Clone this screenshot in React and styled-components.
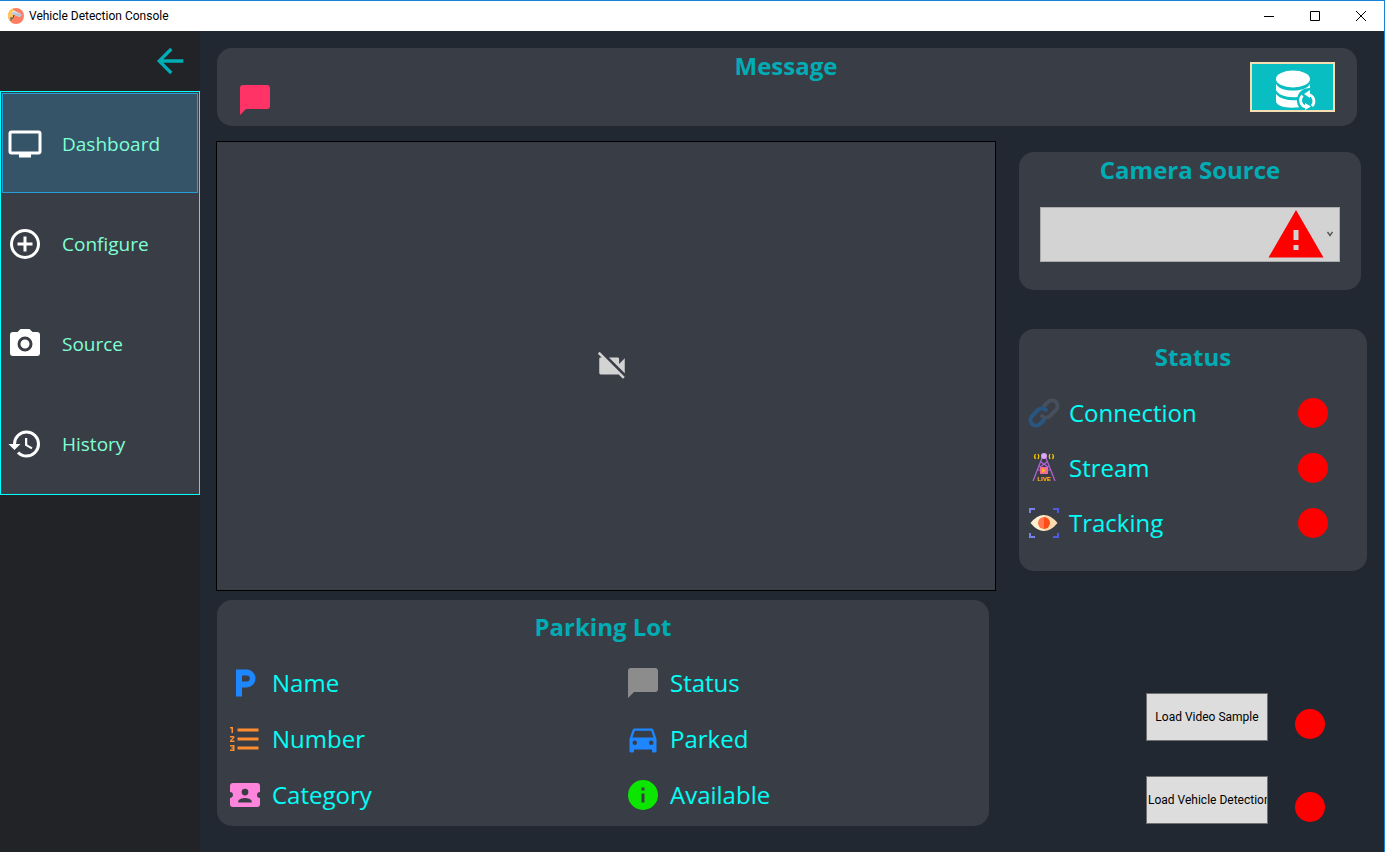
import React, { useState } from 'react'
import styled, { createGlobalStyle, ThemeProvider } from 'styled-components'

const theme = {
  pageBg: '#222831',
  panelBg: '#393e46',
  sideBg: '#222326',
  teal: '#00adb5',
  aqua: '#00fff6',
  mint: '#7fffd4',
  windowBlue: '#1883d7',
}

const GlobalStyle = createGlobalStyle`
  *, *::before, *::after {
    box-sizing: border-box;
  }
  body {
    margin: 0;
    font-family: "Open Sans", "Noto Sans", sans-serif;
  }
  button, select {
    font-family: inherit;
  }
`

const Window = styled.div`
  min-height: 100vh;
  display: flex;
  flex-direction: column;
  background: ${props => props.theme.pageBg};
  border-top: 1px solid ${props => props.theme.windowBlue};
  border-right: 1px solid ${props => props.theme.windowBlue};
`

const TitleBar = styled.header`
  height: 30px;
  flex-shrink: 0;
  display: flex;
  align-items: center;
  background: #fff;
  padding-left: 8px;
  h1 {
    flex: 1;
    margin: 0 0 0 5px;
    font-family: Roboto, sans-serif;
    font-size: 12px;
    font-weight: 400;
    line-height: 16px;
    color: #000;
  }
`

const CaptionButton = styled.button`
  width: 46px;
  height: 29px;
  padding: 0;
  border: none;
  background: none;
  display: flex;
  align-items: center;
  justify-content: center;
`

const Body = styled.div`
  flex: 1;
  display: flex;
`

const Sidebar = styled.aside`
  width: 200px;
  flex-shrink: 0;
  background: ${props => props.theme.sideBg};
`

const BackButton = styled.button`
  display: block;
  margin: 0 10px 0 auto;
  padding: 10px 0;
  border: none;
  background: none;
  color: ${props => props.theme.teal};
  svg {
    display: block;
  }
`

const NavList = styled.ul`
  list-style: none;
  margin: 0;
  padding: 1px;
  border: 1px solid #00ffff;
  background: ${props => props.theme.panelBg};
`

const NavButton = styled.button`
  width: 100%;
  height: 100px;
  padding: 2px 0 0 4px;
  display: flex;
  align-items: center;
  gap: 19px;
  border: 1px solid ${props => (props.$active ? '#26a0da' : 'transparent')};
  background: ${props => (props.$active ? '#355468' : 'none')};
  color: ${props => props.theme.mint};
  font-size: 19px;
  line-height: 28px;
  svg {
    color: #fff;
  }
`

const Main = styled.main`
  flex: 1;
  min-width: 0;
  display: flex;
  flex-direction: column;
  padding: 17px 17px 26px 16px;
`

const Panel = styled.section`
  background: ${props => props.theme.panelBg};
  border-radius: 15px;
`

const PanelTitle = styled.h2`
  display: block;
  margin: 0;
  font-size: 24px;
  font-weight: 700;
  line-height: 32px;
  text-align: center;
  color: ${props => props.theme.teal};
`

const MessagePanel = styled(Panel)`
  height: 78px;
  margin: 0 10px 0 1px;
  padding: 2px 22px 0 20px;
  display: grid;
  grid-template-columns: 85px 1fr 85px;
  svg {
    display: block;
  }
`

const MessageIcon = styled.div`
  padding-top: 32px;
  color: #ff3366;
`

const DatabaseButton = styled.button`
  height: 50px;
  margin-top: 12px;
  padding: 6px 0 0 6px;
  border: 2px solid #f5deb3;
  background: #08bec2;
  display: flex;
  align-items: center;
  justify-content: center;
  color: #fff;
`

const Columns = styled.div`
  flex: 1;
  display: flex;
  gap: 23px;
  padding-top: 15px;
`

const LeftColumn = styled.div`
  flex: 1;
  min-width: 0;
  display: flex;
  flex-direction: column;
  gap: 9px;
`

const VideoArea = styled.div`
  flex: 1;
  min-height: 240px;
  display: flex;
  align-items: center;
  justify-content: center;
  padding-left: 12px;
  border: 1px solid #000;
  background: ${props => props.theme.panelBg};
  color: #d3d3d3;
`

const ParkingPanel = styled(Panel)`
  margin: 0 7px 0 1px;
  padding: 11px 10px 3px;
`

const ParkingGrid = styled.ul`
  list-style: none;
  margin: 0;
  padding: 12px 0 0;
  display: grid;
  grid-template-columns: 398px 1fr;
`

const RightColumn = styled.div`
  width: 348px;
  flex-shrink: 0;
  display: flex;
  flex-direction: column;
`

const CameraPanel = styled(Panel)`
  margin: 11px 6px 39px 0;
  padding: 2px 21px 28px;
`

const SelectWrap = styled.div`
  position: relative;
  margin-top: 21px;
  select {
    display: block;
    appearance: none;
    width: 100%;
    height: 55px;
    border: 1px solid #acacac;
    border-radius: 0;
    background: #d3d3d3;
  }
`

const AlertMark = styled.span`
  position: absolute;
  right: 14px;
  top: -2px;
  color: #ff0000;
  pointer-events: none;
`

const Chevron = styled.svg`
  position: absolute;
  right: 7px;
  top: 24px;
  pointer-events: none;
`

const StatusPanel = styled(Panel)`
  padding: 12px 7px 21px;
`

const StatusList = styled.ul`
  list-style: none;
  margin: 0;
  padding: 12px 0 0;
`

const Row = styled.li`
  height: 56px;
  display: flex;
  align-items: center;
  gap: 9px;
  color: ${props => props.theme.aqua};
  font-size: 24px;
  line-height: 32px;
  svg {
    flex-shrink: 0;
  }
`

const StatusRow = styled(Row)`
  height: 55px;
  gap: 7px;
`

const Lamp = styled.span`
  width: 30px;
  height: 30px;
  flex-shrink: 0;
  border-radius: 50%;
  background: #ff0000;
`

const RowLamp = styled(Lamp)`
  margin: 0 32px 0 auto;
`

const Actions = styled.div`
  margin-top: auto;
  padding: 0 42px 2px 0;
  display: flex;
  flex-direction: column;
  align-items: flex-end;
  gap: 35px;
`

const Action = styled.div`
  display: flex;
  align-items: flex-end;
  gap: 27px;
  ${Lamp} {
    margin-bottom: 2px;
  }
`

const LoadButton = styled.button`
  width: 122px;
  height: 48px;
  padding: 0 1px;
  overflow: hidden;
  display: flex;
  justify-content: ${props => (props.$long ? 'flex-start' : 'center')};
  align-items: center;
  border: 1px solid #707070;
  background: #ddd;
  color: #000;
  font-family: Roboto, sans-serif;
  font-size: 12px;
  line-height: 16px;
  white-space: nowrap;
`

const paths = {
  arrowLeft: 'M20,11V13H8L13.5,18.5L12.08,19.92L4.16,12L12.08,4.08L13.5,5.5L8,11H20Z',
  television: 'M21,17H3V5H21M21,3H3A2,2 0 0,0 1,5V17A2,2 0 0,0 3,19H8V21H16V19H21A2,2 0 0,0 23,17V5A2,2 0 0,0 21,3Z',
  plus: 'M12,20C7.59,20 4,16.41 4,12C4,7.59 7.59,4 12,4C16.41,4 20,7.59 20,12C20,16.41 16.41,20 12,20M12,2A10,10 0 0,0 2,12A10,10 0 0,0 12,22A10,10 0 0,0 22,12A10,10 0 0,0 12,2M13,7H11V11H7V13H11V17H13V13H17V11H13V7Z',
  camera: 'M4,4H7L9,2H15L17,4H20A2,2 0 0,1 22,6V18A2,2 0 0,1 20,20H4A2,2 0 0,1 2,18V6A2,2 0 0,1 4,4M12,7A5,5 0 0,0 7,12A5,5 0 0,0 12,17A5,5 0 0,0 17,12A5,5 0 0,0 12,7M12,9A3,3 0 0,1 15,12A3,3 0 0,1 12,15A3,3 0 0,1 9,12A3,3 0 0,1 12,9Z',
  history: 'M13.5,8H12V13L16.28,15.54L17,14.33L13.5,12.25V8M13,3A9,9 0 0,0 4,12H1L4.96,16.03L9,12H6A7,7 0 0,1 13,5A7,7 0 0,1 20,12A7,7 0 0,1 13,19C11.07,19 9.32,18.21 8.06,16.94L6.64,18.36C8.27,20 10.5,21 13,21A9,9 0 0,0 22,12A9,9 0 0,0 13,3',
  message: 'M20,2H4A2,2 0 0,0 2,4V22L6,18H20A2,2 0 0,0 22,16V4C22,2.89 21.1,2 20,2Z',
  videoOff: 'M3.27,2L2,3.27L4.73,6H4A1,1 0 0,0 3,7V17A1,1 0 0,0 4,18H16C16.2,18 16.39,17.92 16.54,17.82L19.73,21L21,19.73M21,6.5L17,10.5V7A1,1 0 0,0 16,6H9.82L21,17.18V6.5Z',
  parking: 'M13.2,11H10V7H13.2A2,2 0 0,1 15.2,9A2,2 0 0,1 13.2,11M13,3H6V21H10V15H13A6,6 0 0,0 19,9C19,5.68 16.31,3 13,3Z',
  numbers: 'M7,13V11H21V13H7M7,19V17H21V19H7M7,7V5H21V7H7M3,8V5H2V4H4V8H3M2,17V16H5V20H2V19H4V18.5H3V17.5H4V17H2M4.25,10A0.75,0.75 0 0,1 5,10.75C5,10.95 4.92,11.14 4.79,11.27L3.12,13H5V14H2V13.08L4,11H2V10H4.25Z',
  ticket: 'M20,12A2,2 0 0,0 22,14V18A2,2 0 0,1 20,20H4A2,2 0 0,1 2,18V14C3.11,14 4,13.1 4,12A2,2 0 0,0 2,10V6A2,2 0 0,1 4,4H20A2,2 0 0,1 22,6V10A2,2 0 0,0 20,12M16.5,16.25C16.5,14.75 13.5,14 12,14C10.5,14 7.5,14.75 7.5,16.25V17H16.5V16.25M12,12.25A2.25,2.25 0 0,0 14.25,10A2.25,2.25 0 0,0 12,7.75A2.25,2.25 0 0,0 9.75,10A2.25,2.25 0 0,0 12,12.25Z',
  car: 'M5,11L6.5,6.5H17.5L19,11M17.5,16A1.5,1.5 0 0,1 16,14.5A1.5,1.5 0 0,1 17.5,13A1.5,1.5 0 0,1 19,14.5A1.5,1.5 0 0,1 17.5,16M6.5,16A1.5,1.5 0 0,1 5,14.5A1.5,1.5 0 0,1 6.5,13A1.5,1.5 0 0,1 8,14.5A1.5,1.5 0 0,1 6.5,16M18.92,6C18.72,5.42 18.16,5 17.5,5H6.5C5.84,5 5.28,5.42 5.08,6L3,12V20A1,1 0 0,0 4,21H5A1,1 0 0,0 6,20V19H18V20A1,1 0 0,0 19,21H20A1,1 0 0,0 21,20V12L18.92,6Z',
  info: 'M13,9H11V7H13M13,17H11V11H13M12,2A10,10 0 0,0 2,12A10,10 0 0,0 12,22A10,10 0 0,0 22,12A10,10 0 0,0 12,2Z',
  alert: 'M13,14H11V10H13M13,18H11V16H13M1,21H23L12,2L1,21Z',
}

const Icon = ({ name, size = 36, color = 'currentColor' }) => (
  <svg width={size} height={size} viewBox="0 0 24 24" fill={color} aria-hidden="true">
    <path d={paths[name]} />
  </svg>
)

const AppLogo = () => (
  <svg width="16" height="16" viewBox="0 0 16 16" aria-hidden="true">
    <circle cx="8" cy="8" r="8" fill="#ff7d62" />
    <path d="M5 0.600A8 8 0 0 0 3 14.200L5 10Z" fill="#ffc957" />
    <path d="M5 2l8 4-1 3-8-3z" fill="#e4eaf2" />
    <path d="M4 6l8 3 2-2-1-1-8-2z" fill="#b9c5d6" />
    <path d="M6 7l-1 3-2 1M3 9v4" stroke="#4a4a5c" fill="none" />
  </svg>
)

const DatabaseSync = () => (
  <svg width="42" height="40" viewBox="0 0 42 40" fill="#fff" aria-hidden="true">
    <ellipse cx="18" cy="9" rx="17" ry="8.500" />
    <path d="M1 14c3 5 10 6.500 17 6.500S32 19 35 14v4c-6 0-11 3-12.500 9C12 28 3 25 1 20z" />
    <path d="M1 24c4 5 12 6.500 21 6.200 0 3 .6 5 2.200 7C13 38.500 3 37 1 32z" />
    <g fill="none" stroke="#fff" strokeWidth="2.800">
      <path d="M27.500 25.500a7 7 0 0 0 3 11.500" />
      <path d="M34 24.500a7 7 0 0 1 3 11.500" />
    </g>
    <path d="M35 20v8l-6-4zM30 33v7l6-3.500z" />
  </svg>
)

const LinkIcon = () => (
  <svg width="36" height="36" viewBox="0 0 36 36" fill="none" strokeWidth="4" strokeLinecap="round" aria-hidden="true">
    <path d="M18 11l4-4a6 6 0 0 1 8 0 6 6 0 0 1 0 8l-6 6a6 6 0 0 1-8 0" stroke="#474f5d" />
    <path d="M20 15a6 6 0 0 0-8 0l-6 6a6 6 0 0 0 0 8 6 6 0 0 0 8 0l4-4" stroke="#285680" />
  </svg>
)

const TowerIcon = () => (
  <svg width="36" height="36" viewBox="0 0 36 36" fill="none" aria-hidden="true">
    <path d="M16 8L7 31M20 8l9 23M15 12l7 5-8 5M21 12l-7 5 8 5M12 20h12" stroke="#b565d8" strokeWidth="1.200" />
    <circle cx="18" cy="6" r="3" fill="#d9a5f5" />
    <path d="M12 4q1.500 2 0 5M9.500 4q-2 2.500 0 5M24 4q-1.500 2 0 5M26.500 4q2 2.500 0 5" stroke="#f2c500" strokeWidth="1.200" />
    <path d="M14 17h8v7h-8z" fill="#f06a9b" />
    <path d="M16 18l4 2.500-4 2.500z" fill="#ffb020" />
    <text x="18" y="31" textAnchor="middle" fontSize="6" fontWeight="700" fontFamily="Liberation Sans, sans-serif" fill="#f2c500">LIVE</text>
  </svg>
)

const EyeIcon = () => (
  <svg width="36" height="36" viewBox="0 0 36 36" fill="none" aria-hidden="true">
    <path d="M4 8V4h5M4 28v4h5" stroke="#7483ea" strokeWidth="2" />
    <path d="M27 4h5v4M27 32h5v-4" stroke="#4c5be0" strokeWidth="2" />
    <path d="M4.500 18Q11 10 18 10v16Q11 26 4.500 18" fill="#fff0cf" />
    <path d="M18 10q7 0 13.500 8Q25 26 18 26z" fill="#ffdbb0" />
    <path d="M18 12a6 6 0 0 0 0 12z" fill="#ff7650" />
    <path d="M18 12a6 6 0 0 1 0 12z" fill="#ff4b14" />
  </svg>
)

const navItems = [
  { label: 'Dashboard', icon: 'television' },
  { label: 'Configure', icon: 'plus' },
  { label: 'Source', icon: 'camera' },
  { label: 'History', icon: 'history' },
]

const parkingItems = [
  { label: 'Name', icon: 'parking', color: '#1e86ff' },
  { label: 'Status', icon: 'message', color: '#8c8c8c' },
  { label: 'Number', icon: 'numbers', color: '#ff8c2e' },
  { label: 'Parked', icon: 'car', color: '#1e86ff' },
  { label: 'Category', icon: 'ticket', color: '#ff85dc' },
  { label: 'Available', icon: 'info', color: '#0be500' },
]

const statusItems = [
  { label: 'Connection', icon: <LinkIcon /> },
  { label: 'Stream', icon: <TowerIcon /> },
  { label: 'Tracking', icon: <EyeIcon /> },
]

const App = () => {
  const [active, setActive] = useState('Dashboard')

  return (
    <ThemeProvider theme={theme}>
      <GlobalStyle />
      <Window>
        <TitleBar>
          <AppLogo />
          <h1>Vehicle Detection Console</h1>
          <CaptionButton aria-label="Minimize">
            <svg width="10" height="10" stroke="#000"><path d="M0 5.500h10" /></svg>
          </CaptionButton>
          <CaptionButton aria-label="Maximize">
            <svg width="10" height="10" stroke="#000" fill="none"><path d="M.5.5h9v9h-9z" /></svg>
          </CaptionButton>
          <CaptionButton aria-label="Close">
            <svg width="10" height="10" stroke="#000"><path d="M0 0l10 10M10 0L0 10" /></svg>
          </CaptionButton>
        </TitleBar>
        <Body>
          <Sidebar>
            <BackButton aria-label="Back">
              <Icon name="arrowLeft" size={40} />
            </BackButton>
            <nav>
              <NavList>
                {navItems.map(({ label, icon }) => (
                  <li key={label}>
                    <NavButton $active={active === label} onClick={() => setActive(label)}>
                      <Icon name={icon} />
                      {label}
                    </NavButton>
                  </li>
                ))}
              </NavList>
            </nav>
          </Sidebar>
          <Main>
            <MessagePanel>
              <MessageIcon>
                <Icon name="message" />
              </MessageIcon>
              <PanelTitle>Message</PanelTitle>
              <DatabaseButton aria-label="Refresh database">
                <DatabaseSync />
              </DatabaseButton>
            </MessagePanel>
            <Columns>
              <LeftColumn>
                <VideoArea>
                  <Icon name="videoOff" size={34} />
                </VideoArea>
                <ParkingPanel>
                  <PanelTitle>Parking Lot</PanelTitle>
                  <ParkingGrid>
                    {parkingItems.map(({ label, icon, color }) => (
                      <Row key={label}>
                        <Icon name={icon} color={color} />
                        {label}
                      </Row>
                    ))}
                  </ParkingGrid>
                </ParkingPanel>
              </LeftColumn>
              <RightColumn>
                <CameraPanel>
                  <PanelTitle as="label" htmlFor="camera">Camera Source</PanelTitle>
                  <SelectWrap>
                    <select id="camera" />
                    <AlertMark><Icon name="alert" size={60} /></AlertMark>
                    <Chevron width="6" height="6" fill="none" stroke="#555" strokeWidth="1.400">
                      <path d="M.5 1L3 4.500 5.500 1" />
                    </Chevron>
                  </SelectWrap>
                </CameraPanel>
                <StatusPanel>
                  <PanelTitle>Status</PanelTitle>
                  <StatusList>
                    {statusItems.map(({ label, icon }) => (
                      <StatusRow key={label}>
                        {icon}
                        {label}
                        <RowLamp />
                      </StatusRow>
                    ))}
                  </StatusList>
                </StatusPanel>
                <Actions>
                  <Action>
                    <LoadButton>Load Video Sample</LoadButton>
                    <Lamp />
                  </Action>
                  <Action>
                    <LoadButton $long>Load Vehicle Detection</LoadButton>
                    <Lamp />
                  </Action>
                </Actions>
              </RightColumn>
            </Columns>
          </Main>
        </Body>
      </Window>
    </ThemeProvider>
  )
}

export default App
